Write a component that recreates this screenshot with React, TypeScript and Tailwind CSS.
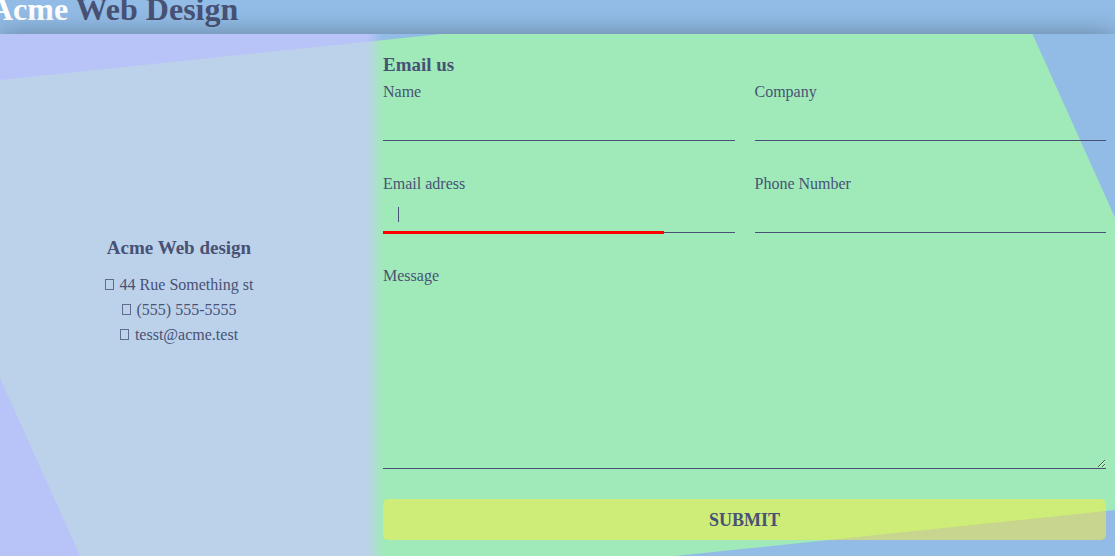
import React from 'react';

type FieldProps = {
  id: string;
  label: string;
  type?: string;
  active?: boolean;
};

function Field({ id, label, type = 'text', active = false }: FieldProps) {
  return (
    <div>
      <label htmlFor={id} className="block leading-[26px]">
        {label}
      </label>
      <div className="relative">
        <input
          id={id}
          name={id}
          type={type}
          className="block h-9 w-full border-b border-[#485274] bg-transparent px-[15px] outline-none"
        />
        {active && (
          <>
            <span aria-hidden="true" className="absolute top-[10px] left-[15px] h-[15px] w-px bg-[#485274]" />
            <span aria-hidden="true" className="absolute -bottom-px left-0 h-[3px] w-4/5 bg-[#ff0000]" />
          </>
        )}
      </div>
    </div>
  );
}

const contacts = ['44 Rue Something st', '(555) 555-5555', 'tesst@acme.test'];

export default function App() {
  return (
    <div className="flex min-h-screen flex-col overflow-hidden bg-[#92bce6] font-['Liberation_Serif',serif] text-base text-[#485274]">
      <header className="h-[34px]">
        <h1 className="-mt-[9px] -ml-[10px] text-[32px] leading-[36px] font-bold whitespace-nowrap">
          <span className="text-white">Acme</span> Web Design
        </h1>
      </header>

      <main className="relative isolate grid flex-1 grid-cols-[383fr_732fr] bg-[#92bce6] shadow-[0_0_24px_0_rgba(0,0,0,0.32)]">
        <div
          aria-hidden="true"
          className="absolute inset-0 -z-10 bg-[#a0eaba] [clip-path:polygon(0_8.8%,39.6%_0,92.6%_0,100%_35.2%,100%_91.2%,60.5%_100%,7.2%_100%,0_65.9%)]"
        />

        <aside className="flex flex-col items-center justify-center bg-[linear-gradient(to_right,rgba(200,199,255,0.7)_calc(100%_-_16px),rgba(200,199,255,0))] pr-[25px] pb-[10px]">
          <h2 className="mb-[10px] text-[19px] leading-7 font-bold">Acme Web design</h2>
          <ul className="text-center leading-[25px]">
            {contacts.map((text) => (
              <li key={text}>
                <span
                  aria-hidden="true"
                  className="mr-[2px] inline-block h-[11px] w-[9px] border border-[#485274]/80 align-baseline"
                />{' '}
                {text}
              </li>
            ))}
          </ul>
        </aside>

        <section className="pt-4 pr-[9px] pb-4">
          <h2 className="text-[19px] leading-[29px] font-bold">Email us</h2>
          <form className="grid grid-cols-2 gap-x-5 gap-y-[30px]" onSubmit={(e) => e.preventDefault()}>
            <Field id="name" label="Name" />
            <Field id="company" label="Company" />
            <Field id="email" label="Email adress" type="email" active />
            <Field id="phone" label="Phone Number" type="tel" />
            <div className="col-span-2">
              <label htmlFor="message" className="block leading-[26px]">
                Message
              </label>
              <textarea
                id="message"
                name="message"
                className="block h-[180px] w-full resize border-b border-[#485274] bg-transparent p-[15px] outline-none"
              />
            </div>
            <button
              type="submit"
              className="col-span-2 h-[41px] rounded-[5px] bg-[rgba(252,238,54,0.5)] text-lg font-bold uppercase"
            >
              Submit
            </button>
          </form>
        </section>
      </main>
    </div>
  );
}
